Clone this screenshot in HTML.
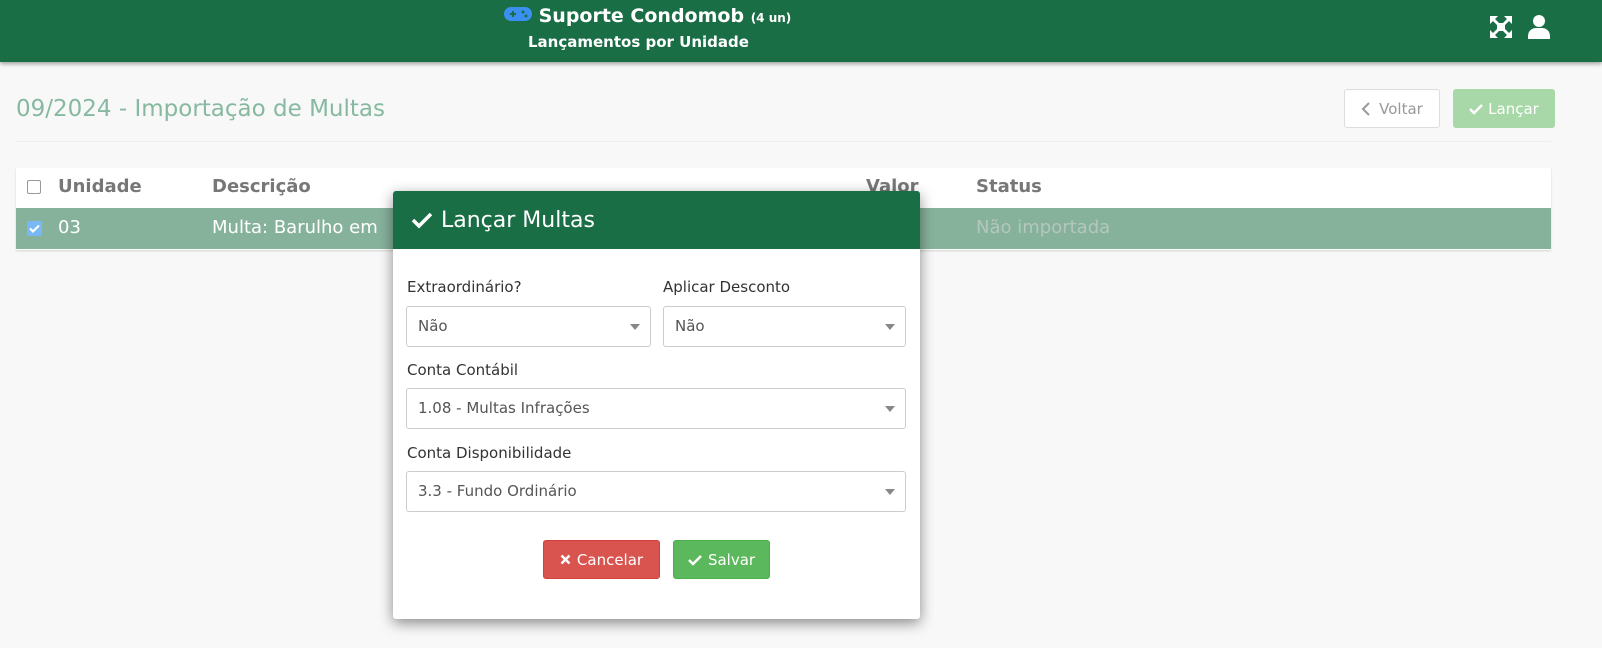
<!DOCTYPE html>
<html><head><meta charset="utf-8"><style>
*{box-sizing:border-box;margin:0;padding:0}
body{width:1602px;height:648px;background:#f8f8f8;font-family:"DejaVu Sans","Liberation Sans",sans-serif;position:relative;overflow:hidden;color:#333}
.hdr{position:absolute;left:0;top:0;width:1602px;height:62px;background:#1a6e46;box-shadow:0 2px 4px rgba(0,0,0,.35)}
.t1{position:absolute;left:504px;top:5px;color:#fff;font-weight:bold;font-size:19px;white-space:nowrap}
.t1 small{font-size:12px}
.t2{position:absolute;left:528px;top:33px;color:#fff;font-weight:bold;font-size:15px;white-space:nowrap}
.title{position:absolute;left:16px;top:96px;font-size:23px;color:#86b9a0;white-space:nowrap}
.hr{position:absolute;left:16px;top:141px;width:1535px;height:1px;background:#eee}
.btn{position:absolute;border-radius:3px;font-size:15px;white-space:nowrap;display:flex;align-items:center;justify-content:center}
.tbl{position:absolute;left:16px;top:168px;width:1535px;height:82px;background:#fff;box-shadow:0 1px 2px rgba(0,0,0,.15)}
.th{position:absolute;top:176px;font-weight:bold;font-size:18px;color:#777}
.row{position:absolute;left:16px;top:208px;width:1535px;height:41px;background:#86b29c}
.td{position:absolute;top:217px;font-size:18px;color:#fff;white-space:nowrap}
.modal{position:absolute;left:393px;top:191px;width:527px;height:428px;background:#fff;box-shadow:0 4px 14px rgba(0,0,0,.45);border-radius:3px}
.mh{height:58px;background:#1a6e46;color:#fff;font-size:22px;display:flex;align-items:center;padding-left:18px;border-radius:3px 3px 0 0}
.lbl{position:absolute;font-size:15px;color:#333;white-space:nowrap}
.sel{position:absolute;height:41px;border:1px solid #ccc;border-radius:3px;background:#fff;font-size:15px;color:#555;padding:10px 11px;white-space:nowrap}
.sel:after{content:"";position:absolute;right:10px;top:17px;border-left:5px solid transparent;border-right:5px solid transparent;border-top:6px solid #888}
</style></head><body>
<div class="hdr">
<div class="t1"><svg width="28" height="14" viewBox="0 0 28 14" style="vertical-align:1px"><rect x="0" y="0" width="28" height="14" rx="7" fill="#3a8ff0"/><path d="M6 7h6M9 4v6" stroke="#1a6e46" stroke-width="2"/><circle cx="19" cy="5" r="1.5" fill="#1a6e46"/><circle cx="22" cy="9" r="1.5" fill="#1a6e46"/></svg> Suporte Condomob <small>(4 un)</small></div>
<div class="t2">Lançamentos por Unidade</div>
<svg style="position:absolute;left:1490px;top:16px" width="22" height="22" viewBox="0 0 22 22" fill="#fff"><path d="M0 0h8l-3 3 4 4-2 2-4-4-3 3zM22 0v8l-3-3-4 4-2-2 4-4-3-3zM0 22v-8l3 3 4-4 2 2-4 4 3 3zM22 22h-8l3-3-4-4 2-2 4 4 3-3z"/><rect x="7" y="7" width="8" height="8"/></svg>
<svg style="position:absolute;left:1528px;top:15px" width="22" height="24" viewBox="0 0 22 24" fill="#fff"><circle cx="11" cy="6" r="6"/><path d="M0 24v-3c0-5 4-8 8-8h6c4 0 8 3 8 8v3z"/></svg>
</div>
<div class="title">09/2024 - Importação de Multas</div>
<div class="btn" style="left:1344px;top:89px;width:96px;height:39px;background:#fff;border:1px solid #ddd;color:#999"><svg width="10" height="14" viewBox="0 0 10 14" style="margin-right:8px"><path d="M8 1L2 7l6 6" stroke="#999" stroke-width="2" fill="none"/></svg>Voltar</div>
<div class="btn" style="left:1453px;top:89px;width:102px;height:39px;background:#a8d8a8;color:#fff"><svg width="14" height="12" viewBox="0 0 14 12" style="margin-right:5px"><path d="M1 6l4 4 8-8" stroke="#fff" stroke-width="2.5" fill="none"/></svg>Lançar</div>
<div class="hr"></div>
<div class="tbl"></div>
<div style="position:absolute;left:27px;top:180px;width:14px;height:14px;border:1px solid #999;border-radius:2px;background:#fff"></div>
<div class="th" style="left:58px">Unidade</div>
<div class="th" style="left:212px">Descrição</div>
<div class="th" style="left:866px">Valor</div>
<div class="th" style="left:976px">Status</div>
<div class="row"></div>
<div style="position:absolute;left:27px;top:221px;width:15px;height:15px;background:#7ab8f5;border-radius:2px"><svg width="15" height="15" viewBox="0 0 15 15"><path d="M3 7.5l3 3 6-6" stroke="#fff" stroke-width="2.2" fill="none"/></svg></div>
<div class="td" style="left:58px">03</div>
<div class="td" style="left:212px">Multa: Barulho em</div>
<div class="td" style="left:976px;color:#b5c7bc">Não importada</div>
<div class="modal">
<div class="mh"><svg width="22" height="18" viewBox="0 0 22 18" style="margin-right:8px"><path d="M2 9l6 6L20 3" stroke="#fff" stroke-width="3.5" fill="none"/></svg>Lançar Multas</div>
<div class="lbl" style="left:14px;top:87px">Extraordinário?</div>
<div class="lbl" style="left:270px;top:87px">Aplicar Desconto</div>
<div class="sel" style="left:13px;top:115px;width:245px">Não</div>
<div class="sel" style="left:270px;top:115px;width:243px">Não</div>
<div class="lbl" style="left:14px;top:170px">Conta Contábil</div>
<div class="sel" style="left:13px;top:197px;width:500px">1.08 - Multas Infrações</div>
<div class="lbl" style="left:14px;top:253px">Conta Disponibilidade</div>
<div class="sel" style="left:13px;top:280px;width:500px">3.3 - Fundo Ordinário</div>
<div class="btn" style="left:150px;top:349px;width:117px;height:39px;background:#d9534f;border:1px solid #d43f3a;color:#fff"><svg width="11" height="11" viewBox="0 0 11 11" style="margin-right:6px"><path d="M1.5 1.5l8 8M9.5 1.5l-8 8" stroke="#fff" stroke-width="2.5"/></svg>Cancelar</div>
<div class="btn" style="left:280px;top:349px;width:97px;height:39px;background:#5cb85c;border:1px solid #4cae4c;color:#fff"><svg width="14" height="12" viewBox="0 0 14 12" style="margin-right:6px"><path d="M1 6l4 4 8-8" stroke="#fff" stroke-width="2.5" fill="none"/></svg>Salvar</div>
</div>
</body></html>
